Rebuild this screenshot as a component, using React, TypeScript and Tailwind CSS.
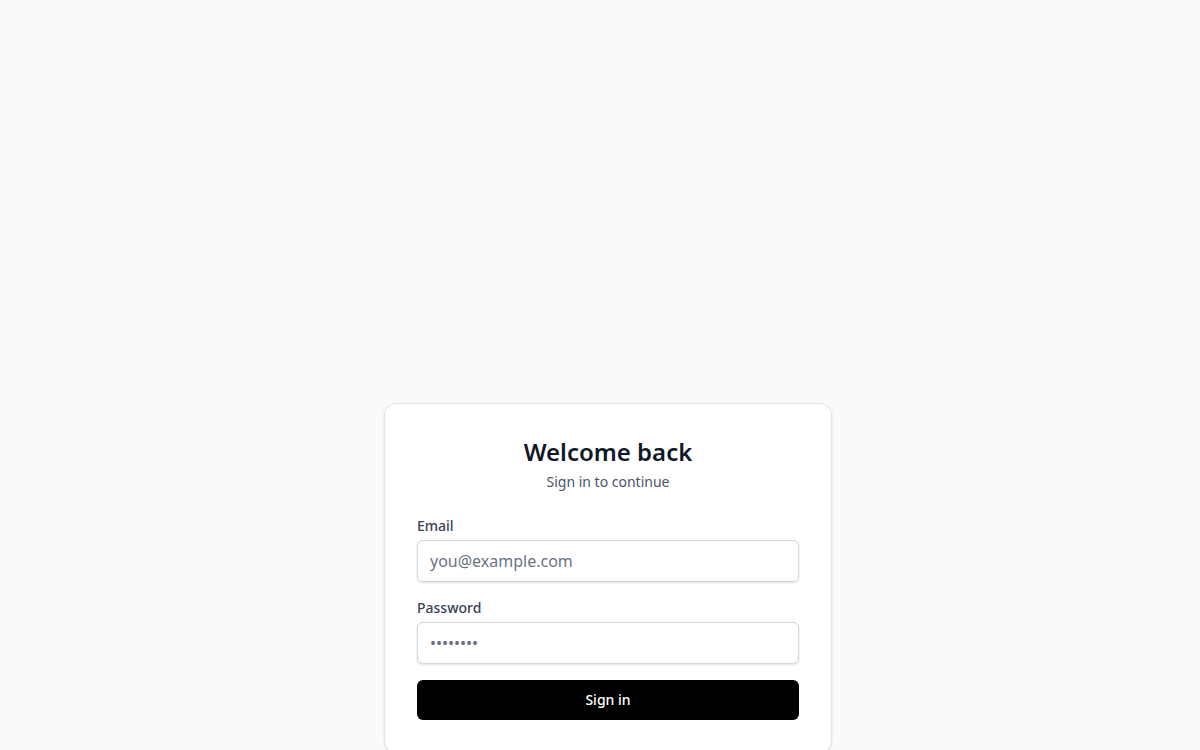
import React from 'react';

const App = () => {
  return (
    <div
      className="min-h-screen bg-gray-50 flex justify-center pt-[403px] pl-4"
      style={{ fontFamily: '"Noto Sans", sans-serif' }}
    >
      <div className="w-full max-w-md h-fit bg-white border border-gray-200 rounded-xl shadow-sm p-8">
        <div className="text-center">
          <h1 className="text-2xl font-semibold text-gray-900">Welcome back</h1>
          <p className="mt-1 text-sm text-gray-600">Sign in to continue</p>
        </div>
        <form className="mt-6 space-y-4" onSubmit={(e) => e.preventDefault()}>
          <div>
            <label className="block text-sm font-medium text-gray-700 mb-1">Email</label>
            <input
              type="email"
              placeholder="you@example.com"
              className="w-full px-3 py-2 text-base border border-gray-300 rounded-md shadow-sm placeholder:text-gray-500 outline-none"
            />
          </div>
          <div>
            <label className="block text-sm font-medium text-gray-700 mb-1">Password</label>
            <input
              type="password"
              placeholder="••••••••"
              className="w-full px-3 py-2 text-base border border-gray-300 rounded-md shadow-sm placeholder:text-gray-500 outline-none"
            />
          </div>
          <button
            type="submit"
            className="w-full py-2.5 bg-black text-white text-sm font-medium rounded-md"
          >
            Sign in
          </button>
        </form>
      </div>
    </div>
  );
};

export default App;
